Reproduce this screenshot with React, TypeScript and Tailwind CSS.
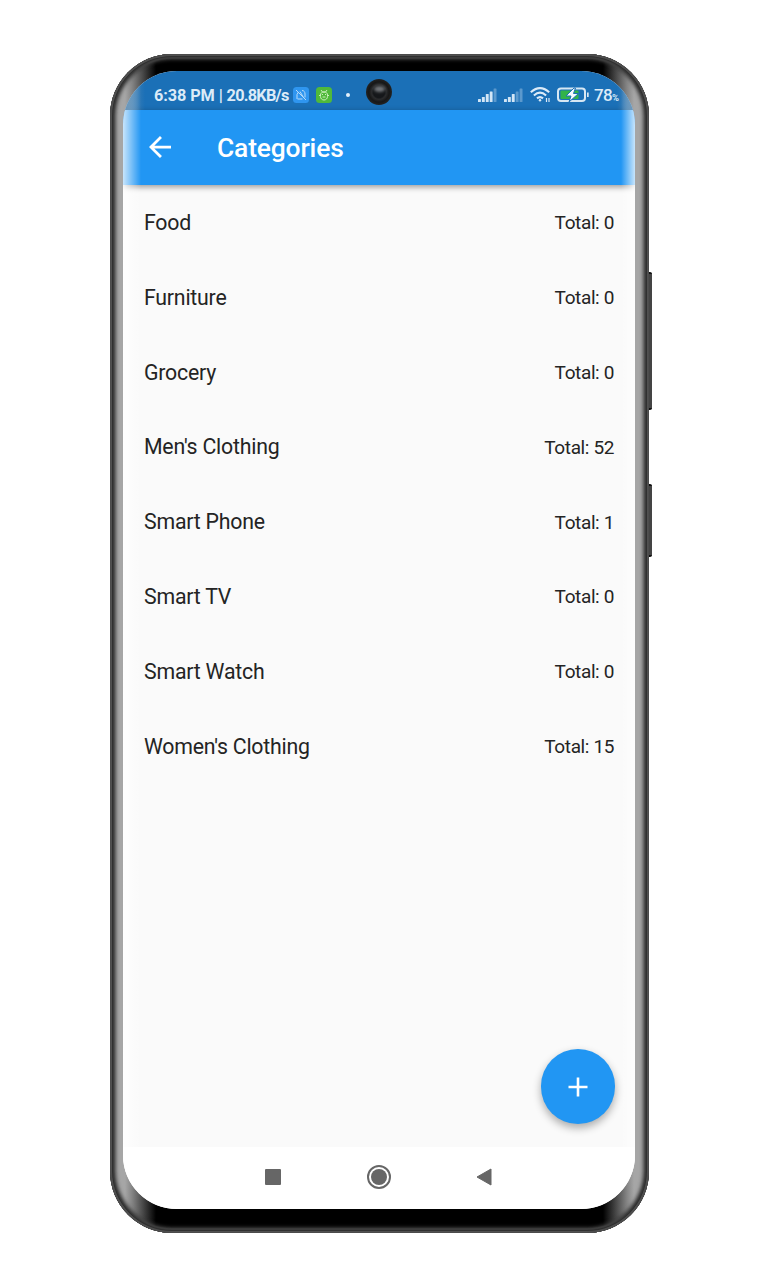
const categories = [
  { name: "Food", total: 0 },
  { name: "Furniture", total: 0 },
  { name: "Grocery", total: 0 },
  { name: "Men's Clothing", total: 52 },
  { name: "Smart Phone", total: 1 },
  { name: "Smart TV", total: 0 },
  { name: "Smart Watch", total: 0 },
  { name: "Women's Clothing", total: 15 },
];

function Signal({ strength }: { strength: number }) {
  return (
    <svg width="19" height="14" viewBox="0 0 19 14" fill="#d3e6f6">
      {[3, 5, 8, 10.5, 13.5].map((h, i) => (
        <rect key={h} x={i * 3.9} y={14 - h} width="2.9" height={h} rx="0.5" opacity={i < strength ? 1 : 0.35} />
      ))}
    </svg>
  );
}

function StatusBar() {
  return (
    <div className="relative flex h-[39px] shrink-0 items-center bg-[#1b70b7] pl-[31px] pr-[16px] pt-[10px] text-[#dcebf8]">
      <span className="w-[135px] pt-[2px] whitespace-nowrap text-[16.3px] leading-none font-bold tracking-[-0.1px]">
        6:38 PM | <span className="tracking-[-0.750px]">20.8KB/s</span>
      </span>
      <svg className="ml-[4px] -mt-[2px]" width="16" height="16" viewBox="0 0 16 16">
        <rect width="16" height="16" rx="3.5" fill="#2f96f0" />
        <path d="M4 12V7.500L5.500 5M4.500 12h5M7 4.500l3.500 6M9 3.500c2 0 3 1.500 3 3.500v3.500M3 3l10 10" fill="none" stroke="#b9dcf8" strokeWidth="1" />
      </svg>
      <svg className="ml-[7px] -mt-[2px]" width="16" height="16" viewBox="0 0 16 16">
        <rect width="16" height="16" rx="3.5" fill="#50b93a" />
        <path d="M5 3l1.500 2h3L11 3M4.500 8c0-2 1.500-3 3.500-3s3.500 1 3.500 3v1.500c0 2-1.500 3.500-3.500 3.500s-3.500-1.500-3.500-3.500zM3 8.500h1.500M11.500 8.500H13M6.500 7v1M9.500 7v1M6.500 10h3" fill="none" stroke="#c9efbb" strokeWidth="1" />
      </svg>
      <span className="ml-[14px] -mt-[1px] size-[4px] rounded-full bg-[#e3f0fb]" />
      <div className="absolute top-[8px] left-[243px] size-[26px] rounded-full bg-[radial-gradient(circle_at_50%_50%,#15171a_0_31%,#2a2b2d_40%,#171717_55%,#222_70%)]">
        <div className="absolute top-[7px] left-[8px] h-[6px] w-[11px] rounded-[50%] bg-[#74777b] blur-[1.5px]" />
      </div>
      <div className="-mt-[1px] ml-auto flex items-center">
        <Signal strength={4} />
        <div className="ml-[7px] flex"><Signal strength={3} /></div>
        <svg className="ml-[7px]" width="21" height="16" viewBox="0 0 21 16" fill="none" stroke="#dcebf8" strokeWidth="2.100">
          <path d="M.8 5.300Q10 -3 19.200 5.300M3.900 8.400Q10 2.800 16.100 8.400M7 11.400Q10 8.700 13 11.400" />
          <circle cx="10" cy="13.300" r="1.200" fill="#dcebf8" stroke="none" />
          <path d="M16.500 11v4M19 11v4" strokeWidth="1.200" />
        </svg>
        <svg className="ml-[6px]" width="32" height="16" viewBox="0 0 32 16">
          <rect x="1" y="1.500" width="27" height="12.500" rx="3" fill="none" stroke="#d7e7f3" strokeWidth="2" />
          <rect x="3.500" y="3.500" width="18" height="8.500" rx="1" fill="#32b34a" />
          <path d="M30 5.500h1.700v4.500H30z" fill="#d7e7f3" />
          <path d="M17 1L9 9h5L12 15l9.500-8.500h-5L18.500 1z" fill="#f4fbff" stroke="#1b70b7" strokeWidth="1" />
        </svg>
        <span className="ml-[5px] flex w-[25px] items-baseline whitespace-nowrap text-[17px] leading-none font-medium tracking-[-0.650px]">
          78<span className="text-[9.500px] font-bold">%</span>
        </span>
      </div>
    </div>
  );
}

function AppBar() {
  return (
    <header className="relative flex h-[75px] shrink-0 items-center bg-[#2196f3] pl-[26px] text-white shadow-[0_2px_6px_rgba(0,0,0,0.4)]">
      <svg className="-mt-[2px]" width="22" height="22" viewBox="4 4 16 16" fill="currentColor">
        <path d="M20 11H7.830l5.590-5.590L12 4l-8 8 8 8 1.410-1.410L7.830 13H20v-2z" />
      </svg>
      <h1 className="ml-[46px] pt-[2px] text-[26.400px] leading-none font-medium tracking-[-0.150px]">Categories</h1>
    </header>
  );
}

function NavBar() {
  return (
    <nav className="flex h-[62px] shrink-0 items-center bg-white pb-[2px] pl-[142px]">
      <div className="size-[16px] rounded-[1px] bg-[#666]" />
      <div className="ml-[86px] flex size-[24px] items-center justify-center rounded-full border-2 border-[#666]">
        <div className="size-[16px] rounded-full bg-[#666]" />
      </div>
      <svg className="ml-[85px]" width="16" height="18" viewBox="0 0 16 18">
        <path d="M15 1v16L1 9z" fill="#666" stroke="#666" strokeWidth="1" strokeLinejoin="round" />
      </svg>
    </nav>
  );
}

export default function App() {
  return (
    <main className="flex h-[1280px] w-[759px] bg-white pt-[54px] pl-[110px] font-[Roboto,sans-serif]">
      <div className="relative h-[1179px] w-[539px] rounded-[62px] bg-[linear-gradient(to_right,#a6a6a6_0,#a6a6a6_15px,#858585_22px,#000_46px,#000_493px,#858585_517px,#a6a6a6_524px)] px-[13px] pt-[17px] shadow-[inset_0_0_0_1px_#4c4c4c,inset_0_0_0_2px_#505050,inset_0_0_0_3px_#303030,inset_0_0_0_4px_#3d3d3d,inset_0_0_2px_5px_#444,inset_0_0_3px_7px_rgba(60,60,60,0.5)]">
        <div className="absolute top-[218px] -right-[3px] h-[138px] w-[3px] rounded-r-[2px] border-y-2 border-[#111] bg-[#444]" />
        <div className="absolute top-[430px] -right-[3px] h-[73px] w-[3px] rounded-r-[2px] border-y-2 border-[#111] bg-[#444]" />
        <div className="relative flex h-[1138px] w-[512px] flex-col overflow-hidden rounded-[54px] bg-[#fafafa] text-[#242424]">
          <StatusBar />
          <AppBar />
          <ul className="flex-1">
            {categories.map((c) => (
              <li key={c.name} className="flex h-[74.900px] items-center justify-between pr-[21px] pl-[21px]">
                <span className="text-[21.300px] leading-none tracking-[-0.220px]">{c.name}</span>
                <span className="text-[19px] leading-none tracking-[-0.380px]">Total: {c.total}</span>
              </li>
            ))}
          </ul>
          <NavBar />
          <div className="pointer-events-none absolute inset-y-0 left-0 w-[18px] bg-linear-to-r from-white/75 to-transparent" />
          <div className="pointer-events-none absolute inset-y-0 right-0 w-[14px] bg-linear-to-l from-white/75 to-transparent" />
          <div className="pointer-events-none absolute inset-x-0 top-0 h-[39px] bg-[linear-gradient(to_right,#5f8db2_0,transparent_22px,transparent_494px,#5f8db2_512px)]" />
          <button aria-label="Add category" className="absolute right-[20.500px] bottom-[85px] flex h-[75px] w-[73.500px] items-center justify-center rounded-full bg-[#2196f3] shadow-[0_4px_9px_rgba(0,0,0,0.32)]">
            <svg width="20" height="20" viewBox="0 0 20 20" stroke="#fff" strokeWidth="2.600">
              <path d="M10 .5v19M.5 10h19" />
            </svg>
          </button>
        </div>
      </div>
    </main>
  );
}
